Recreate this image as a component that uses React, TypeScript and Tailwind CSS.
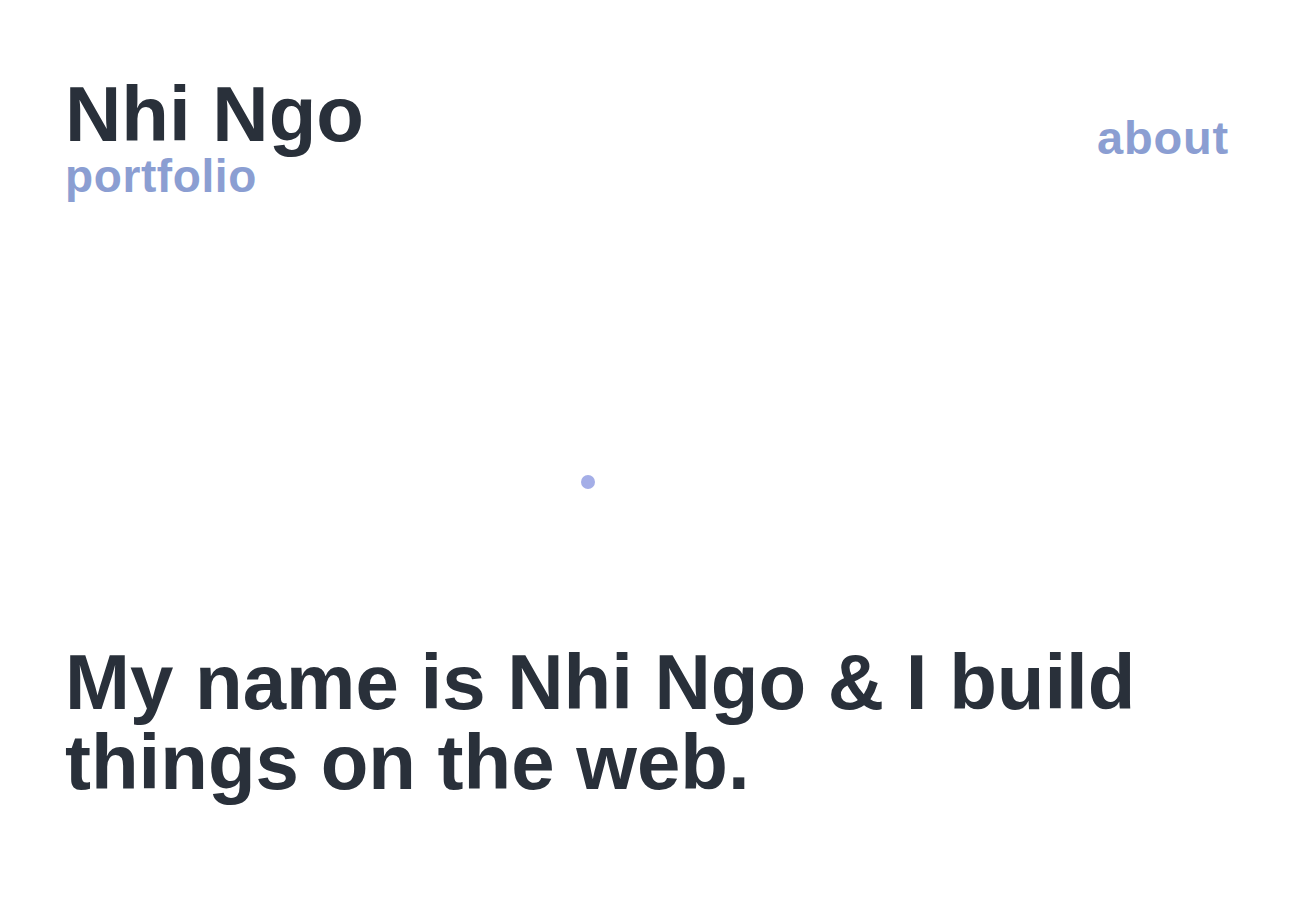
const font = { fontFamily: '"Liberation Sans", Arial, sans-serif' };

function Header() {
	return (
		<header className="flex items-center justify-between px-[65px] pt-[75px]">
			<div className="flex flex-col">
				<h1 className="text-[78px] font-bold leading-none text-[#29303a]">Nhi Ngo</h1>
				<span className="text-[46px] font-bold leading-none tracking-[0.6px] text-[#8b9ed2]">portfolio</span>
			</div>
			<a href="#about" className="text-[47px] font-bold leading-none tracking-[0.8px] text-[#8b9ed2]">
				about
			</a>
		</header>
	);
}

export default function App() {
	return (
		<div className="min-h-screen bg-white" style={font}>
			<Header />
			<main className="px-[65px]">
				<div className="pt-[276px]">
					<div className="ml-[516px] h-[14px] w-[14px] rounded-full bg-[#a4aee7]" />
				</div>
				<h2 className="mt-[153px] pb-[100px] text-[78px] font-bold leading-[80px] text-[#29303a]">
					My name is Nhi Ngo &amp; I build things on the web.
				</h2>
			</main>
		</div>
	);
}
